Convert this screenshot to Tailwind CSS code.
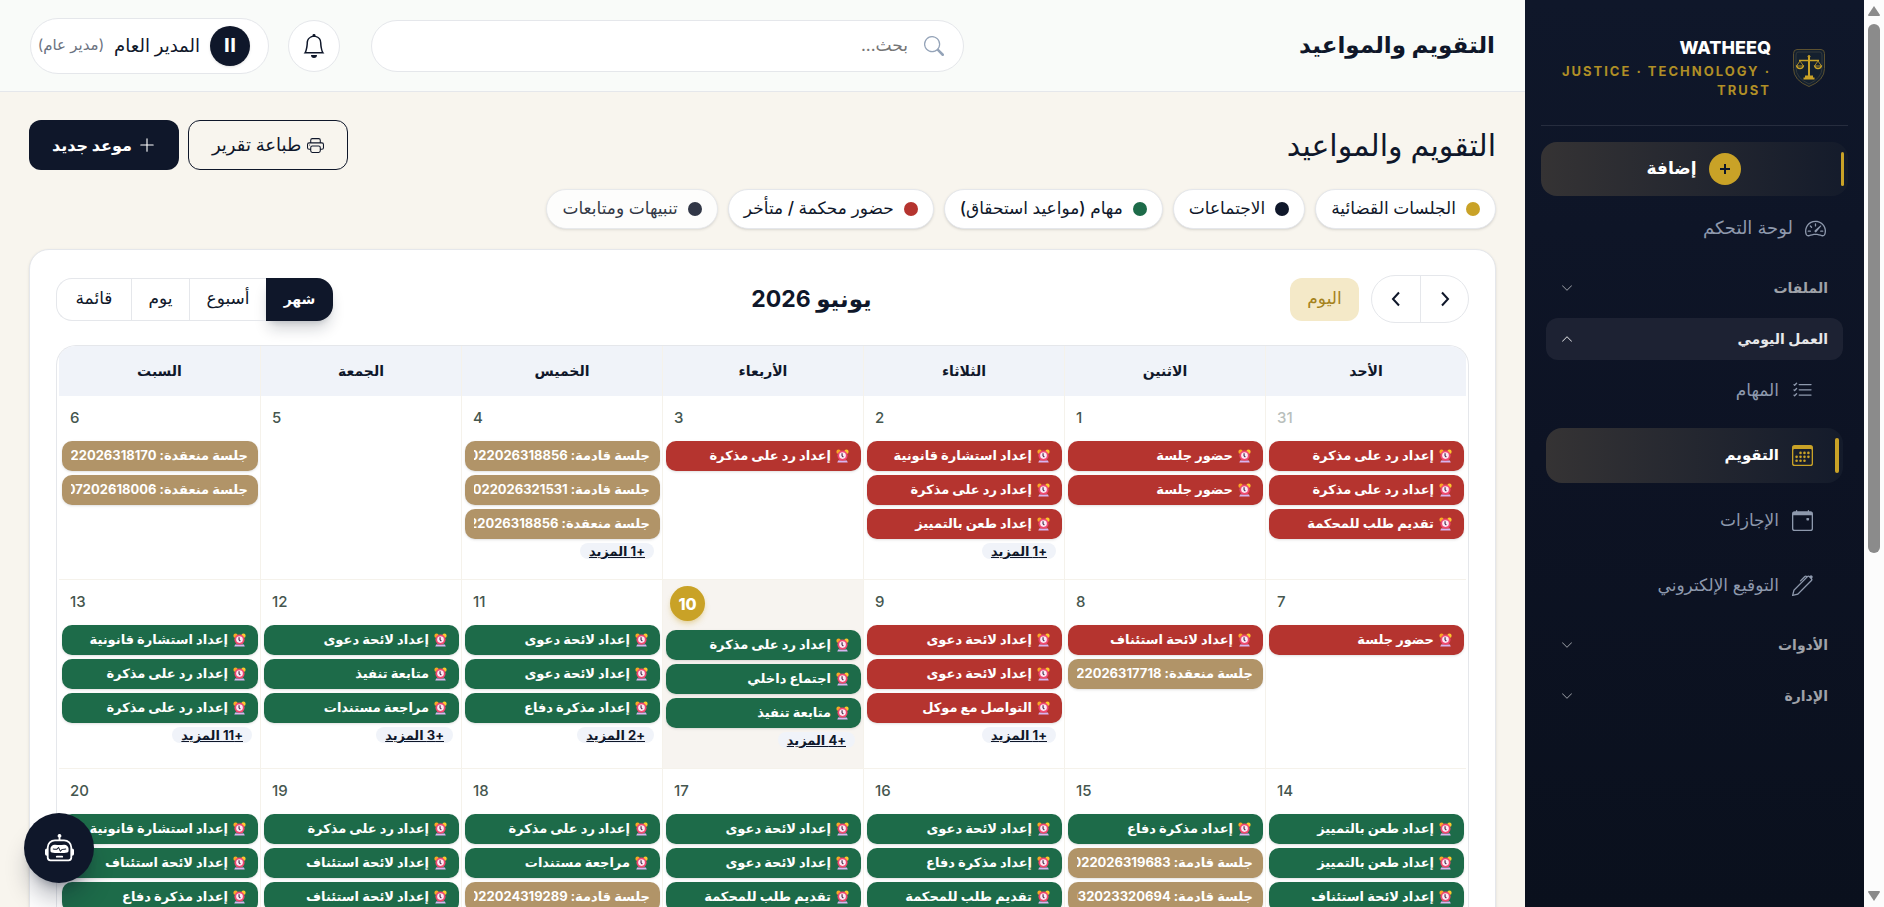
<!DOCTYPE html>
<html lang="ar" dir="rtl">

<head>
  <meta charset="UTF-8">
  <meta name="viewport" content="width=device-width, initial-scale=1.0">
  <script src="https://cdn.jsdelivr.net/npm/@tailwindcss/browser@4"></script>
  <title>التقويم والمواعيد</title>
</head>

<body class="flex h-screen overflow-hidden bg-[#f8f5ee] text-[#0f172a] [font-family:Inter,'DejaVu_Sans',sans-serif]">
  <!-- Icon sprite -->
  <svg class="hidden">
    <symbol id="i-chevron" viewBox="0 0 16 16"><path d="M1.646 4.646a.5.5 0 0 1 .708 0L8 10.293l5.646-5.647a.5.5 0 0 1 .708.708l-6 6a.5.5 0 0 1-.708 0l-6-6a.5.5 0 0 1 0-.708"/></symbol>
    <symbol id="i-alarm" viewBox="0 0 14 16">
      <circle cx="2.500" cy="3" r="2.500" fill="#f9a825"/><circle cx="11.500" cy="3" r="2.500" fill="#fdc92e"/>
      <path d="M2 13h10l1 2.500H1z" fill="#d8b4f0"/>
      <circle cx="7" cy="7.500" r="5.800" fill="#f0476f"/><circle cx="7" cy="7.500" r="3.800" fill="#fbe9f5"/>
      <path d="M6.500 4.800v3l1.500 1.500" fill="none" stroke="#4a2545" stroke-width="1.300"/>
    </symbol>
  </svg>

  <!-- Scrollbar -->
  <div class="flex w-5 shrink-0 flex-col items-center justify-between bg-[#fcfcfc] py-1.5">
    <div class="flex flex-col items-center gap-2">
      <svg class="h-[10px] w-3 fill-[#8b8b8b]" viewBox="0 0 12 10"><path d="M6 0l6 9q0 1-1 1H1q-1 0-1-1z"/></svg>
      <div class="h-[529px] w-3 rounded-full bg-[#8b8b8b]"></div>
    </div>
    <svg class="h-[10px] w-3 rotate-180 fill-[#8b8b8b]" viewBox="0 0 12 10"><path d="M6 0l6 9q0 1-1 1H1q-1 0-1-1z"/></svg>
  </div>

  <!-- Sidebar -->
  <aside class="flex w-[339px] shrink-0 flex-col bg-linear-to-b from-[#0f172a] via-[#0d1324] to-[#0a101d] px-4">
    <div class="flex h-[126px] items-center gap-[22px] border-b border-white/10 pr-[23px] pt-[11px]">
      <svg class="h-[38px] w-8 shrink-0" viewBox="0 0 32 38" fill="none" stroke="#c9a227">
        <path d="M4 .500h24q3.500 0 3.500 4v15q0 12-15.500 18Q.500 31.500.500 19.500v-15q0-4 3.500-4z" fill="#14202f" stroke="#5c5130"/>
        <path d="M5 3h22q2 0 2 3v13q0 10-13 16Q3 29 3 19V6q0-3 2-3z" stroke="#33393a"/>
        <path d="M6 11.500h20" stroke-width="1.500"/><path d="M16 8v20" stroke-width="2"/><circle cx="16" cy="7.500" r="1" fill="#c9a227"/>
        <path d="M7 12l-3.500 5h7zM25 12l-3.500 5h7z" stroke="#a98a2a"/>
        <path d="M3.500 16.500q.500 3 3.500 3t3.500-3M21.500 16.500q.500 3 3.500 3t3.500-3" stroke-width="1.500"/>
        <path d="M12 27.500h8M10.500 29.500h11" stroke-width="2"/>
      </svg>
      <div>
        <p class="text-lg font-extrabold leading-6 text-white">WATHEEQ</p>
        <p class="mt-0.5 text-[13px] font-bold leading-[19px] tracking-[2px] text-[#b08f26]">JUSTICE · TECHNOLOGY · TRUST</p>
      </div>
    </div>

    <nav class="flex flex-col pt-4">
      <button class="relative flex h-[54px] items-center justify-center gap-3 rounded-2xl bg-linear-to-l from-[#141b2b] to-[#353334] pr-0.5 text-[17px] font-bold text-white">
        <span class="absolute right-1 top-[10px] h-[34px] w-[3px] rounded-full bg-[#c9a227]"></span>
        <span class="flex size-8 items-center justify-center rounded-full bg-[#c9a227]">
          <svg class="size-[10px] stroke-[#0f172a]" viewBox="0 0 10 10" stroke-width="2"><path d="M5 0v10M0 5h10"/></svg>
        </span>
        إضافة
      </button>

      <a href="#" class="mt-[5px] flex h-[54px] items-center gap-3 pr-[22px] text-lg text-[#8e99ad]">
        <svg class="size-[21px] fill-current" viewBox="0 0 16 16"><path d="M8 4a.5.5 0 0 1 .5.5V6a.5.5 0 0 1-1 0V4.500A.5.5 0 0 1 8 4M3.732 5.732a.5.5 0 0 1 .707 0l.915.914a.5.5 0 1 1-.708.708l-.914-.915a.5.5 0 0 1 0-.707M2 10a.5.5 0 0 1 .5-.5h1.586a.5.5 0 0 1 0 1H2.500A.5.5 0 0 1 2 10m9.500 0a.5.5 0 0 1 .5-.5h1.500a.5.5 0 0 1 0 1H12a.5.5 0 0 1-.5-.5m.754-4.246a.39.39 0 0 0-.527-.02L7.547 9.310a.91.91 0 1 0 1.302 1.258l3.434-4.297a.39.39 0 0 0-.029-.518z"/><path fill-rule="evenodd" d="M0 10a8 8 0 1 1 15.547 2.661c-.442 1.253-1.845 1.602-2.932 1.250C11.309 13.488 9.475 13 8 13c-1.474 0-3.310.488-4.615.911-1.087.352-2.490.003-2.932-1.250A8 8 0 0 1 0 10m8-7a7 7 0 0 0-6.603 9.329c.203.575.923.876 1.680.630C4.397 12.533 6.358 12 8 12s3.604.532 4.923.960c.757.245 1.477-.056 1.680-.631A7 7 0 0 0 8 3"/></svg>
        لوحة التحكم
      </a>

      <div class="flex flex-col gap-[9px] px-[5px] pt-3 text-sm font-bold text-[#9fa2a9]">
        <button class="flex h-[42px] items-center justify-between px-[15px]">الملفات
          <svg class="size-3 fill-current"><use href="#i-chevron"/></svg>
        </button>
        <button class="flex h-[42px] items-center justify-between rounded-xl bg-[#1d2233] px-[15px] text-[#e7e8ea]">العمل اليومي
          <svg class="size-3 rotate-180 fill-current"><use href="#i-chevron"/></svg>
        </button>
      </div>

      <div class="flex flex-col gap-[10px] px-[5px] pt-[3px] text-[17px] text-[#8e99ad]">
        <a href="#" class="flex h-[55px] items-center gap-[13px] pr-[30px]">
          <svg class="size-[21px] fill-current" viewBox="0 0 16 16"><path d="M5 11.500a.5.5 0 0 1 .5-.5h9a.5.5 0 0 1 0 1h-9a.5.5 0 0 1-.5-.5m0-4a.5.5 0 0 1 .5-.5h9a.5.5 0 0 1 0 1h-9a.5.5 0 0 1-.5-.5m0-4a.5.5 0 0 1 .5-.5h9a.5.5 0 0 1 0 1h-9a.5.5 0 0 1-.5-.5M3.854 2.146a.5.5 0 0 1 0 .708l-1.500 1.500a.5.5 0 0 1-.708 0l-.5-.5a.5.5 0 1 1 .708-.708L2 3.293l1.146-1.147a.5.5 0 0 1 .708 0m0 4a.5.5 0 0 1 0 .708l-1.500 1.500a.5.5 0 0 1-.708 0l-.5-.5a.5.5 0 1 1 .708-.708l.146.147 1.146-1.147a.5.5 0 0 1 .708 0m0 4a.5.5 0 0 1 0 .708l-1.500 1.500a.5.5 0 0 1-.708 0l-.5-.5a.5.5 0 0 1 .708-.708l.146.147 1.146-1.147a.5.5 0 0 1 .708 0"/></svg>
          المهام
        </a>
        <a href="#" class="relative flex h-[55px] items-center gap-[13px] rounded-2xl bg-linear-to-l from-[#141b2b] to-[#353334] pr-[30px] text-[15px] font-bold text-white">
          <span class="absolute right-1 top-[10px] h-[35px] w-1 rounded-full bg-[#c9a227]"></span>
          <svg class="size-[21px] fill-[#c9a227]" viewBox="0 0 16 16"><path d="M14 0H2a2 2 0 0 0-2 2v12a2 2 0 0 0 2 2h12a2 2 0 0 0 2-2V2a2 2 0 0 0-2-2M1 3.857C1 3.384 1.448 3 2 3h12c.552 0 1 .384 1 .857v10.286c0 .473-.448.857-1 .857H2c-.552 0-1-.384-1-.857z"/><path d="M6.500 7a1 1 0 1 0 0-2 1 1 0 0 0 0 2m3 0a1 1 0 1 0 0-2 1 1 0 0 0 0 2m3 0a1 1 0 1 0 0-2 1 1 0 0 0 0 2m-9 3a1 1 0 1 0 0-2 1 1 0 0 0 0 2m3 0a1 1 0 1 0 0-2 1 1 0 0 0 0 2m3 0a1 1 0 1 0 0-2 1 1 0 0 0 0 2m3 0a1 1 0 1 0 0-2 1 1 0 0 0 0 2m-9 3a1 1 0 1 0 0-2 1 1 0 0 0 0 2m3 0a1 1 0 1 0 0-2 1 1 0 0 0 0 2m3 0a1 1 0 1 0 0-2 1 1 0 0 0 0 2"/></svg>
          التقويم
        </a>
        <a href="#" class="flex h-[55px] items-center gap-[13px] pr-[30px]">
          <svg class="size-[21px] fill-current" viewBox="0 0 16 16"><path d="M11 6.500a.5.5 0 0 1 .5-.5h1a.5.5 0 0 1 .5.5v1a.5.5 0 0 1-.5.5h-1a.5.5 0 0 1-.5-.5z"/><path d="M3.500 0a.5.5 0 0 1 .5.5V1h8V.5a.5.5 0 0 1 1 0V1h1a2 2 0 0 1 2 2v11a2 2 0 0 1-2 2H2a2 2 0 0 1-2-2V3a2 2 0 0 1 2-2h1V.5a.5.5 0 0 1 .5-.5M1 4v10a1 1 0 0 0 1 1h12a1 1 0 0 0 1-1V4z"/></svg>
          الإجازات
        </a>
        <a href="#" class="flex h-[55px] items-center gap-[13px] pr-[30px]">
          <svg class="size-[21px] fill-current" viewBox="0 0 16 16"><path d="m13.498.795.149-.149a1.207 1.207 0 1 1 1.707 1.708l-.149.148a1.500 1.500 0 0 1-.059 2.059L4.854 14.854a.5.5 0 0 1-.233.131l-4 1a.5.5 0 0 1-.606-.606l1-4a.5.5 0 0 1 .131-.232l9.642-9.642a.5.5 0 0 0-.642.056L6.854 4.854a.5.5 0 1 1-.708-.708L9.440.854A1.500 1.500 0 0 1 11.500.796a1.500 1.500 0 0 1 1.998-.001m-.644.766a.5.5 0 0 0-.707 0L1.950 11.756l-.764 3.057 3.057-.764L14.440 3.854a.5.5 0 0 0 0-.708z"/></svg>
          التوقيع الإلكتروني
        </a>
      </div>

      <div class="flex flex-col gap-[9px] px-[5px] pt-[11px] text-sm font-bold text-[#9fa2a9]">
        <button class="flex h-[42px] items-center justify-between px-[15px]">الأدوات
          <svg class="size-3 fill-current"><use href="#i-chevron"/></svg>
        </button>
        <button class="flex h-[42px] items-center justify-between px-[15px]">الإدارة
          <svg class="size-3 fill-current"><use href="#i-chevron"/></svg>
        </button>
      </div>
    </nav>
  </aside>

  <div class="flex min-w-0 flex-1 flex-col">
    <!-- Top bar -->
    <header class="flex h-[92px] shrink-0 items-center border-b border-[#e5e7eb] bg-[#f9fbf9] px-[30px]">
      <div class="flex-1 text-[23px] font-bold">التقويم والمواعيد</div>
      <div class="flex h-[52px] w-[593px] items-center gap-4 rounded-full border border-[#e5e7eb] bg-white px-[19px]">
        <svg class="size-5 fill-[#94a3b8]" viewBox="0 0 16 16"><path d="M11.742 10.344a6.500 6.500 0 1 0-1.397 1.398h-.001q.044.060.098.115l3.850 3.850a1 1 0 0 0 1.415-1.414l-3.850-3.850a1 1 0 0 0-.115-.100zM12 6.500a5.500 5.500 0 1 1-11 0 5.500 5.500 0 0 1 11 0"/></svg>
        <input type="text" aria-label="بحث" placeholder="بحث..." class="min-w-0 flex-1 text-[17px] outline-none placeholder:text-[#757575]">
      </div>
      <button aria-label="الإشعارات" class="mr-[31px] flex size-[52px] items-center justify-center rounded-full border border-[#e5e7eb] bg-white">
        <svg class="size-6 fill-[#0f172a]" viewBox="0 0 16 16"><path d="M8 16a2 2 0 0 0 2-2H6a2 2 0 0 0 2 2M8 1.918l-.797.161A4 4 0 0 0 4 6c0 .628-.134 2.197-.459 3.742-.160.767-.376 1.566-.663 2.258h10.244c-.287-.692-.502-1.490-.663-2.258C12.134 8.197 12 6.628 12 6a4 4 0 0 0-3.203-3.920zM14.220 12c.223.447.481.801.780 1H1c.299-.199.557-.553.780-1C2.680 10.200 3 6.880 3 6c0-2.420 1.720-4.440 4.005-4.901a1 1 0 1 1 1.990 0A5 5 0 0 1 13 6c0 .880.320 4.200 1.220 6"/></svg>
      </button>
      <button class="mr-[19px] flex h-14 w-[239px] items-center gap-[10px] whitespace-nowrap rounded-full border border-[#e5e7eb] bg-white pr-[18px]">
        <span class="flex size-10 items-center justify-center rounded-full bg-[#0f172a] text-lg font-bold text-white shadow-sm">اا</span>
        <span class="text-lg font-medium">المدير العام</span>
        <span class="text-[15px] text-[#6b7280]">(مدير عام)</span>
      </button>
    </header>

    <main class="px-[29px] pt-7">
      <div class="flex items-center justify-between">
        <h1 class="text-3xl font-medium">التقويم والمواعيد</h1>
        <div class="flex gap-[9px]">
          <button class="flex h-[50px] items-center gap-1.5 rounded-xl border border-[#0f172a] px-[23px] text-lg font-medium">
            <svg class="size-[17px] fill-current" viewBox="0 0 16 16"><path d="M2.500 8a.5.5 0 1 0 0-1 .5.5 0 0 0 0 1"/><path d="M5 1a2 2 0 0 0-2 2v2H2a2 2 0 0 0-2 2v3a2 2 0 0 0 2 2h1v1a2 2 0 0 0 2 2h6a2 2 0 0 0 2-2v-1h1a2 2 0 0 0 2-2V7a2 2 0 0 0-2-2h-1V3a2 2 0 0 0-2-2zM4 3a1 1 0 0 1 1-1h6a1 1 0 0 1 1 1v2H4zm1 5a2 2 0 0 0-2 2v1H2a1 1 0 0 1-1-1V7a1 1 0 0 1 1-1h12a1 1 0 0 1 1 1v3a1 1 0 0 1-1 1h-1v-1a2 2 0 0 0-2-2zm7 2v3a1 1 0 0 1-1 1H5a1 1 0 0 1-1-1v-3a1 1 0 0 1 1-1h6a1 1 0 0 1 1 1"/></svg>
            طباعة تقرير
          </button>
          <button class="flex h-[50px] items-center gap-1.5 rounded-xl bg-[#0f172a] px-[23px] text-base font-bold text-white">
            <svg class="size-[18px] fill-current" viewBox="0 0 16 16"><path d="M8 2a.5.5 0 0 1 .5.5v5h5a.5.5 0 0 1 0 1h-5v5a.5.5 0 0 1-1 0v-5h-5a.5.5 0 0 1 0-1h5v-5A.5.5 0 0 1 8 2"/></svg>
            موعد جديد
          </button>
        </div>
      </div>

      <!-- Legend -->
      <ul class="mt-[19px] flex gap-[10px] whitespace-nowrap text-[17px] font-medium">
        <li class="flex h-10 items-center gap-[10px] rounded-full border border-[#e5e7eb] bg-white px-[15px] shadow-sm"><span class="size-[14px] rounded-full bg-[#c9a227]"></span>الجلسات القضائية</li>
        <li class="flex h-10 items-center gap-[10px] rounded-full border border-[#e5e7eb] bg-white px-[15px] shadow-sm"><span class="size-[14px] rounded-full bg-[#0f172a]"></span>الاجتماعات</li>
        <li class="flex h-10 items-center gap-[10px] rounded-full border border-[#e5e7eb] bg-white px-[15px] shadow-sm"><span class="size-[14px] rounded-full bg-[#1d6b49]"></span>مهام (مواعيد استحقاق)</li>
        <li class="flex h-10 items-center gap-[10px] rounded-full border border-[#e5e7eb] bg-white px-[15px] shadow-sm"><span class="size-[14px] rounded-full bg-[#b5342f]"></span>حضور محكمة / متأخر</li>
        <li class="flex h-10 items-center gap-[10px] rounded-full border border-[#e5e7eb] bg-white px-[15px] opacity-85 shadow-sm"><span class="size-[14px] rounded-full bg-[#0f172a]"></span>تنبيهات ومتابعات</li>
      </ul>

      <!-- Calendar card -->
      <section class="mt-5 rounded-[20px] border border-[#e5e7eb] bg-white px-[26px] pt-[25px] shadow-sm">
        <div class="flex items-center justify-between">
          <div class="flex items-center gap-3">
            <div class="flex h-12 divide-x divide-[#e5e7eb] rounded-full border border-[#e5e7eb]">
              <button aria-label="السابق" class="flex w-12 items-center justify-center">
                <svg class="h-4 w-[10px] fill-none stroke-[#0f172a]" viewBox="0 0 10 16" stroke-width="2"><path d="M2 1.500l6 6.500-6 6.500"/></svg>
              </button>
              <button aria-label="التالي" class="flex w-12 items-center justify-center">
                <svg class="h-4 w-[10px] fill-none stroke-[#0f172a]" viewBox="0 0 10 16" stroke-width="2"><path d="M8 1.500l-6 6.500 6 6.500"/></svg>
              </button>
            </div>
            <button class="h-[43px] w-[69px] rounded-xl bg-[#f4e9c8] text-[17px] font-medium text-[#a5821a]">اليوم</button>
          </div>
          <h2 class="text-[23px] font-bold">يونيو 2026</h2>
          <div class="flex h-[43px] text-[17px] font-medium">
            <button class="w-[67px] rounded-r-2xl bg-[#0f172a] text-sm font-bold text-white shadow-lg shadow-[#0f172a]/20">شهر</button>
            <button class="w-[77px] border-y border-l border-[#e5e7eb]">أسبوع</button>
            <button class="w-[58px] border-y border-l border-[#e5e7eb]">يوم</button>
            <button class="w-[75px] rounded-l-2xl border-y border-l border-[#e5e7eb]">قائمة</button>
          </div>
        </div>

        <div class="mt-[22px] overflow-hidden rounded-t-[20px] border border-b-0 border-[#e5e7eb] px-0.5">
          <table class="w-full table-fixed border-separate border-spacing-0">
            <thead>
              <tr id="week-days"></tr>
            </thead>
            <tbody id="weeks"></tbody>
          </table>
        </div>
      </section>
    </main>
  </div>

  <!-- Assistant button -->
  <button aria-label="المساعد" class="absolute bottom-6 left-6 flex size-[70px] items-center justify-center rounded-full bg-[#0f172a] shadow-xl shadow-[#0f172a]/30">
    <svg class="size-[29px] fill-white" viewBox="0 0 16 16"><path d="M6 12.500a.5.5 0 0 1 .5-.5h3a.5.5 0 0 1 0 1h-3a.5.5 0 0 1-.5-.5M3 8.062C3 6.760 4.235 5.765 5.530 5.886a26.600 26.600 0 0 0 4.940 0C11.765 5.765 13 6.760 13 8.062v1.157a.930.930 0 0 1-.765.935c-.845.147-2.340.346-4.235.346s-3.390-.200-4.235-.346A.930.930 0 0 1 3 9.219zm4.542-.827a.25.25 0 0 0-.217.068l-.920.900a25 25 0 0 1-1.871-.183.25.25 0 0 0-.068.495c.55.076 1.232.149 2.020.193a.25.25 0 0 0 .189-.071l.754-.736.847 1.710a.25.25 0 0 0 .404.062l.932-.970a25 25 0 0 0 1.922-.188.25.25 0 0 0-.068-.495c-.538.074-1.207.145-1.980.189a.25.25 0 0 0-.166.076l-.754.785-.842-1.700a.25.25 0 0 0-.182-.135"/><path d="M8.500 1.866a1 1 0 1 0-1 0V3h-2A4.500 4.500 0 0 0 1 7.500V8a1 1 0 0 0-1 1v2a1 1 0 0 0 1 1v1a2 2 0 0 0 2 2h10a2 2 0 0 0 2-2v-1a1 1 0 0 0 1-1V9a1 1 0 0 0-1-1v-.5A4.500 4.500 0 0 0 10.500 3h-2zM14 7.500V13a1 1 0 0 1-1 1H3a1 1 0 0 1-1-1V7.500A3.500 3.500 0 0 1 5.500 4h5A3.500 3.500 0 0 1 14 7.500"/></svg>
  </button>

  <script>
    const weekDays = ['الأحد', 'الاثنين', 'الثلاثاء', 'الأربعاء', 'الخميس', 'الجمعة', 'السبت'];

    // r = late / court, g = task, s = session
    const colors = { r: 'bg-[#b5342f]', g: 'bg-[#1d6b49]', s: 'bg-[#b19468]' };

    const weeks = [
      [
        { day: 31, other: true, events: [['r', 'إعداد رد على مذكرة'], ['r', 'إعداد رد على مذكرة'], ['r', 'تقديم طلب للمحكمة']] },
        { day: 1, events: [['r', 'حضور جلسة'], ['r', 'حضور جلسة']] },
        { day: 2, events: [['r', 'إعداد استشارة قانونية'], ['r', 'إعداد رد على مذكرة'], ['r', 'إعداد طعن بالتمييز']], more: 1 },
        { day: 3, events: [['r', 'إعداد رد على مذكرة']] },
        { day: 4, events: [['s', 'جلسة قادمة: 022026318856'], ['s', 'جلسة قادمة: 022026321531'], ['s', 'جلسة منعقدة: 22026318856']], more: 1 },
        { day: 5, events: [] },
        { day: 6, events: [['s', 'جلسة منعقدة: 22026318170'], ['s', 'جلسة منعقدة: 07202618006']] },
      ],
      [
        { day: 7, events: [['r', 'حضور جلسة']] },
        { day: 8, events: [['r', 'إعداد لائحة استئناف'], ['s', 'جلسة منعقدة: 22026317718']] },
        { day: 9, events: [['r', 'إعداد لائحة دعوى'], ['r', 'إعداد لائحة دعوى'], ['r', 'التواصل مع موكل']], more: 1 },
        { day: 10, today: true, events: [['g', 'إعداد رد على مذكرة'], ['g', 'اجتماع داخلي'], ['g', 'متابعة تنفيذ']], more: 4 },
        { day: 11, events: [['g', 'إعداد لائحة دعوى'], ['g', 'إعداد لائحة دعوى'], ['g', 'إعداد مذكرة دفاع']], more: 2 },
        { day: 12, events: [['g', 'إعداد لائحة دعوى'], ['g', 'متابعة تنفيذ'], ['g', 'مراجعة مستندات']], more: 3 },
        { day: 13, events: [['g', 'إعداد استشارة قانونية'], ['g', 'إعداد رد على مذكرة'], ['g', 'إعداد رد على مذكرة']], more: 11 },
      ],
      [
        { day: 14, events: [['g', 'إعداد طعن بالتمييز'], ['g', 'إعداد طعن بالتمييز'], ['g', 'إعداد لائحة استئناف']] },
        { day: 15, events: [['g', 'إعداد مذكرة دفاع'], ['s', 'جلسة قادمة: 022026319683'], ['s', 'جلسة قادمة: 032023320694']] },
        { day: 16, events: [['g', 'إعداد لائحة دعوى'], ['g', 'إعداد مذكرة دفاع'], ['g', 'تقديم طلب للمحكمة']] },
        { day: 17, events: [['g', 'إعداد لائحة دعوى'], ['g', 'إعداد لائحة دعوى'], ['g', 'تقديم طلب للمحكمة']] },
        { day: 18, events: [['g', 'إعداد رد على مذكرة'], ['g', 'مراجعة مستندات'], ['s', 'جلسة قادمة: 022024319289']] },
        { day: 19, events: [['g', 'إعداد رد على مذكرة'], ['g', 'إعداد لائحة استئناف'], ['g', 'إعداد لائحة استئناف']] },
        { day: 20, events: [['g', 'إعداد استشارة قانونية'], ['g', 'إعداد لائحة استئناف'], ['g', 'إعداد مذكرة دفاع']] },
      ],
    ];

    // One coloured bar; everything but a session gets the alarm clock
    function eventBar([type, title]) {
      const icon = type === 's' ? '' : '<svg class="h-[14px] w-[13px] shrink-0"><use href="#i-alarm"/></svg>';
      const pad = type === 's' ? 'pr-[10px]' : 'pr-3';
      return `
        <a href="#" class="flex h-[30px] items-center rounded-[10px] pl-[9px] text-[13px] font-bold text-white shadow-sm ${pad} ${colors[type]}">
          <span class="flex min-w-0 flex-1 items-center gap-[5px] overflow-hidden whitespace-nowrap">${icon}<span>${title}</span></span>
        </a>`;
    }

    function dayCell(cell) {
      const number = cell.today
        ? `<div class="flex h-[50px] items-start justify-end pl-[7px] pt-[6px]"><span class="flex size-[35px] items-center justify-center rounded-full bg-[#c9a227] text-base font-extrabold text-white shadow-md shadow-[#c9a227]/30">${cell.day}</span></div>`
        : `<div class="flex h-[45px] items-center justify-end pb-px pl-[11px] text-[15px] font-medium ${cell.other ? 'text-[#b9bfbc]' : 'text-[#45564e]'}">${cell.day}</div>`;
      const more = cell.more
        ? `<a href="#" class="mr-2 block h-4 w-fit rounded-full bg-[#f0f3f9] px-[9px] text-[13px] font-bold leading-4 underline">+${cell.more} المزيد</a>`
        : '';
      return `
        <td class="border-b border-l border-[#f5f2eb] p-0 align-top last:border-l-0 ${cell.today ? 'bg-[#f7f4f0]' : ''}">
          ${number}
          <div class="flex flex-col gap-1 pl-[3px] pr-0.5">${cell.events.map(eventBar).join('')}</div>
          <div class="pt-1">${more}</div>
        </td>`;
    }

    document.getElementById('week-days').innerHTML = weekDays
      .map((name) => `<th class="h-[50px] border-l border-[#f5f2eb] bg-[#f0f3f9] text-sm font-bold last:border-l-0">${name}</th>`)
      .join('');

    document.getElementById('weeks').innerHTML = weeks
      .map((week, i) => `<tr class="${i === 0 ? 'h-[184px]' : 'h-[189px]'}">${week.map(dayCell).join('')}</tr>`)
      .join('');
  </script>
</body>

</html>
